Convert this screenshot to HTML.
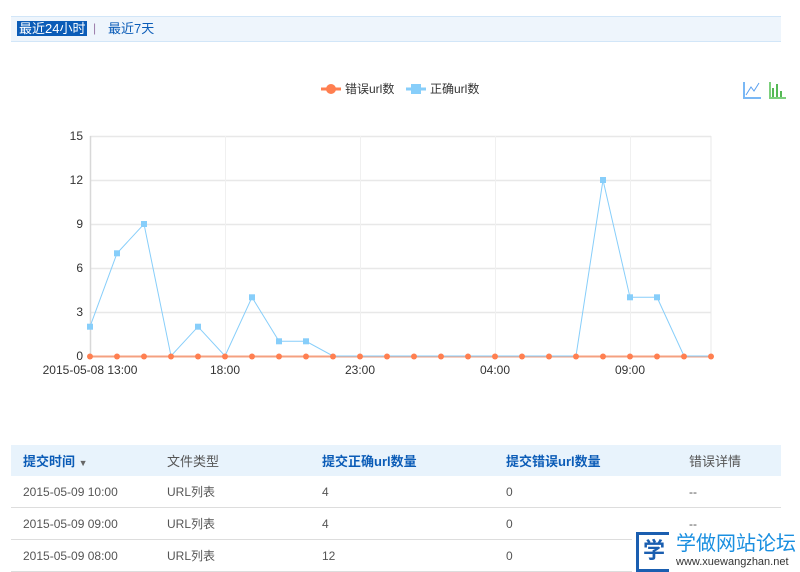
<!DOCTYPE html>
<html><head><meta charset="utf-8"><style>
body{margin:0;width:800px;height:572px;background:#fff;font-family:"Liberation Sans","Noto Sans CJK SC",sans-serif;position:relative;overflow:hidden}
.tabs{position:absolute;left:11px;top:16px;width:770px;height:24px;background:#eef5fc;border-top:1px solid #d2e6f8;border-bottom:1px solid #d2e6f8}
.tabs .a{position:absolute;left:6px;top:4px;height:15px;line-height:15px;padding:0 2px;background:#0b5cb7;color:#fff;font-size:13px}
.tabs .sep{position:absolute;left:82px;top:4px;color:#9a7aa8;font-size:12px}
.tabs .b{position:absolute;left:97px;top:4px;line-height:15px;color:#0b5cb7;font-size:13px}
table{position:absolute;left:11px;top:445px;width:770px;border-collapse:collapse;font-size:12px}
th{background:#e8f3fc;height:31px;text-align:left;font-weight:bold;color:#0b5cb7;font-size:13px;padding:0 0 0 12px}
th.g{color:#555;font-weight:normal}
td{height:31px;border-bottom:1px solid #ddd;color:#555;padding:0 0 0 12px}
</style></head><body>
<div class="tabs"><span class="a">最近24小时</span><span class="sep">|</span><span class="b">最近7天</span></div>
<svg width="800" height="420" style="position:absolute;left:0;top:0" font-family="Liberation Sans, sans-serif">
<g stroke="#e8e8e8" stroke-width="1.5">
<line x1="90" y1="136.5" x2="711" y2="136.5"/><line x1="90" y1="180.5" x2="711" y2="180.5"/><line x1="90" y1="224.5" x2="711" y2="224.5"/><line x1="90" y1="268.5" x2="711" y2="268.5"/><line x1="90" y1="312.5" x2="711" y2="312.5"/>
</g>
<g stroke="#f0f0f0" stroke-width="1"><line x1="225.5" y1="136" x2="225.5" y2="356"/><line x1="360.5" y1="136" x2="360.5" y2="356"/><line x1="495.5" y1="136" x2="495.5" y2="356"/><line x1="630.5" y1="136" x2="630.5" y2="356"/><line x1="711" y1="136" x2="711" y2="356" stroke="#e8e8e8"/></g>
<line x1="90.5" y1="136" x2="90.5" y2="357" stroke="#d8d8d8" stroke-width="1.5"/>
<g font-size="12" fill="#333" text-anchor="end"><text x="83" y="140">15</text><text x="83" y="184">12</text><text x="83" y="228">9</text><text x="83" y="272">6</text><text x="83" y="316">3</text><text x="83" y="360">0</text></g>
<g font-size="12" fill="#333" text-anchor="middle"><text x="90" y="374">2015-05-08 13:00</text><text x="225" y="374">18:00</text><text x="360" y="374">23:00</text><text x="495" y="374">04:00</text><text x="630" y="374">09:00</text></g>
<line x1="90" y1="356.5" x2="711" y2="356.5" stroke="#f4a080" stroke-width="2"/>
<polyline fill="none" stroke="#87cefa" stroke-width="1" points="90,326.7 117,253.3 144,224 171,356 198,326.7 225,356 252,297.3 279,341.3 306,341.3 333,356 576,356 603,180 630,297.3 657,297.3 684,356 711,356"/>
<g fill="#87cefa">
<rect x="87" y="323.7" width="6" height="6"/><rect x="114" y="250.3" width="6" height="6"/><rect x="141" y="221" width="6" height="6"/><rect x="195" y="323.7" width="6" height="6"/><rect x="249" y="294.3" width="6" height="6"/><rect x="276" y="338.3" width="6" height="6"/><rect x="303" y="338.3" width="6" height="6"/><rect x="600" y="177" width="6" height="6"/><rect x="627" y="294.3" width="6" height="6"/><rect x="654" y="294.3" width="6" height="6"/>
</g>
<g fill="#ff7f50">
<circle cx="90" cy="356.5" r="3"/><circle cx="117" cy="356.5" r="3"/><circle cx="144" cy="356.5" r="3"/><circle cx="171" cy="356.5" r="3"/><circle cx="198" cy="356.5" r="3"/><circle cx="225" cy="356.5" r="3"/><circle cx="252" cy="356.5" r="3"/><circle cx="279" cy="356.5" r="3"/><circle cx="306" cy="356.5" r="3"/><circle cx="333" cy="356.5" r="3"/><circle cx="360" cy="356.5" r="3"/><circle cx="387" cy="356.5" r="3"/><circle cx="414" cy="356.5" r="3"/><circle cx="441" cy="356.5" r="3"/><circle cx="468" cy="356.5" r="3"/><circle cx="495" cy="356.5" r="3"/><circle cx="522" cy="356.5" r="3"/><circle cx="549" cy="356.5" r="3"/><circle cx="576" cy="356.5" r="3"/><circle cx="603" cy="356.5" r="3"/><circle cx="630" cy="356.5" r="3"/><circle cx="657" cy="356.5" r="3"/><circle cx="684" cy="356.5" r="3"/><circle cx="711" cy="356.5" r="3"/>
</g>
<line x1="321" y1="89" x2="341" y2="89" stroke="#ff7f50" stroke-width="3"/><circle cx="331" cy="89" r="5" fill="#ff7f50"/>
<text x="345" y="93" font-size="12" fill="#333" font-family="Liberation Sans, Noto Sans CJK SC, sans-serif">错误url数</text>
<line x1="406" y1="89" x2="426" y2="89" stroke="#87cefa" stroke-width="3"/><rect x="411" y="84" width="10" height="10" fill="#87cefa"/>
<text x="430" y="93" font-size="12" fill="#333" font-family="Liberation Sans, Noto Sans CJK SC, sans-serif">正确url数</text>
<path d="M744 82V98H761" stroke="#7ab8f5" stroke-width="2" fill="none"/><path d="M746 95L751 87L754 91L759 83" stroke="#5aa0f0" stroke-width="1" fill="none"/>
<path d="M770 82V98H786" stroke="#7dd07d" stroke-width="2" fill="none"/><g fill="#55b855"><rect x="772" y="88" width="2" height="9"/><rect x="776" y="84" width="2" height="13"/><rect x="780" y="91" width="2" height="6"/></g>
</svg>
<table>
<tr><th style="width:132px">提交时间 <span style="font-size:9px;color:#666">▼</span></th><th class="g" style="width:143px">文件类型</th><th style="width:172px">提交正确url数量</th><th style="width:171px">提交错误url数量</th><th class="g">错误详情</th></tr>
<tr><td>2015-05-09 10:00</td><td>URL列表</td><td>4</td><td>0</td><td>--</td></tr>
<tr><td>2015-05-09 09:00</td><td>URL列表</td><td>4</td><td>0</td><td>--</td></tr>
<tr><td>2015-05-09 08:00</td><td>URL列表</td><td>12</td><td>0</td><td>--</td></tr>
</table>
<div style="position:absolute;left:632px;top:532px;width:168px;height:40px;background:#fff"></div>
<div style="position:absolute;left:636px;top:532px;width:30px;height:34px;border:3px solid #1a5eb0;border-right:none;background:#fff;font-size:22px;line-height:32px;color:#1a5eb0;text-align:center;font-weight:bold">学</div>
<div style="position:absolute;left:676px;top:529px;font-size:20px;color:#1a8fe0;font-family:'Noto Sans CJK SC',sans-serif;line-height:26px">学做网站论坛</div>
<div style="position:absolute;left:676px;top:556px;font-size:11px;color:#333">www.xuewangzhan.net</div>
</body></html>
